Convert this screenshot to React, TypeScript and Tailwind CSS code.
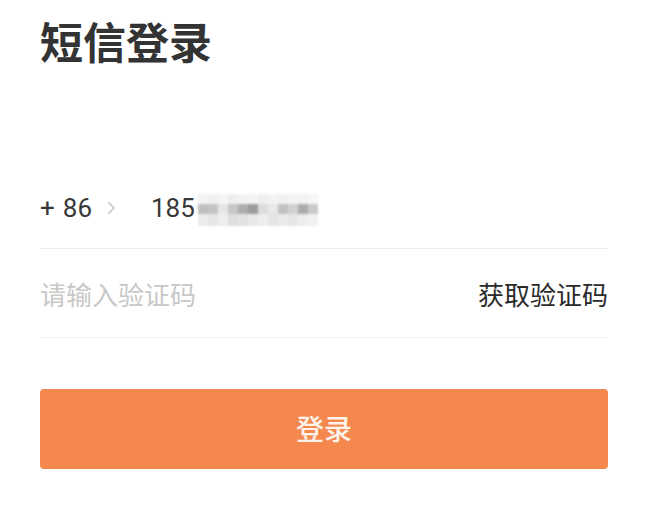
const mosaic: string[][] = [
  ['#f3f3f3', '#f1f1f1', '#f5f5f5', '#eeeeee', '#f2f2f2', '#f4f4f4', '#efefef', '#f3f3f3', '#f0f0f0', '#f4f4f4', '#f2f2f2', '#f6f6f6'],
  ['#bfbfbf', '#c4c4c4', '#e6e6e6', '#c6c6c6', '#adadad', '#9c9c9c', '#dcdcdc', '#e8e8e8', '#c2c2c2', '#d2d2d2', '#acacac', '#cacaca'],
  ['#ececec', '#e6e6e6', '#efefef', '#dedede', '#e2e2e2', '#e8e8e8', '#eeeeee', '#e4e4e4', '#eaeaea', '#e6e6e6', '#ededed', '#f1f1f1'],
];

function BlurredNumber() {
  return (
    <svg width="120" height="32" viewBox="0 0 120 32" className="blur-[1px]">
      {mosaic.map((row, r) =>
        row.map((c, i) => (
          <rect key={`${r}-${i}`} x={i * 10} y={r * 10} width="10" height={r === 2 ? 12 : 10} fill={c} />
        ))
      )}
    </svg>
  );
}

export default function App() {
  const font = { fontFamily: 'Roboto, "Noto Sans CJK SC", sans-serif' };
  return (
    <div className="w-[648px] h-[525px] bg-white px-[40px]" style={font}>
      <h1 className="pt-[21px] text-[43px] leading-[46px] font-bold text-[#333333]">短信登录</h1>

      <div className="mt-[101px] h-[81px] flex items-center border-b border-[#eeeeee] text-[26px] text-[#383838]">
        <span className="w-[63px] flex">
          <span>+</span>
          <span className="ml-[8px]">86</span>
        </span>
        <svg width="12" height="16" viewBox="0 0 12 16" className="ml-[3px]" fill="none">
          <path d="M2.5 2.5l5.5 5.5-5.5 5.5" stroke="#c6c6c6" strokeWidth="1.6" />
        </svg>
        <span className="ml-[33px]">185</span>
        <span className="ml-[3px] mt-[3px]">
          <BlurredNumber />
        </span>
      </div>

      <div className="h-[89px] pt-[6px] flex items-center justify-between border-b border-[#f2f2f2] text-[26px]">
        <span className="text-[#c8c8c8]">请输入验证码</span>
        <span className="text-[#2a2a2a]">获取验证码</span>
      </div>

      <button className="mt-[51px] w-full h-[80px] pt-[4px] rounded-[4px] bg-[#f5884e] text-[28px] text-[#fdf3ea] font-medium">
        登录
      </button>
    </div>
  );
}
